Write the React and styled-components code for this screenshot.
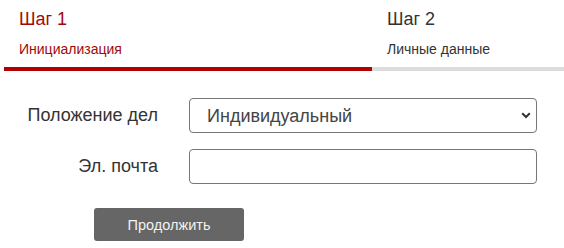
import React from 'react';
import styled, { createGlobalStyle } from 'styled-components';

const GlobalStyle = createGlobalStyle`
  html, body {
    margin: 0;
    padding: 0;
    background: #fff;
    font-family: "Liberation Sans", Arial, sans-serif;
    overflow: hidden;
  }
`;

const Page = styled.div`
  width: 564px;
  height: 248px;
  overflow: hidden;
`;

const Steps = styled.div`
  display: flex;
  width: 736px;
  margin-left: 4px;
  padding-top: 9px;
`;

const Step = styled.div`
  width: 368px;
  flex: none;
  padding: 0 0 10px 15px;
  box-sizing: border-box;
  border-bottom: 4px solid ${(p) => (p.active || p.done ? '#b30000' : '#dcdcdc')};
  color: ${(p) => (p.active ? '#a00a0a' : '#333')};
`;

const StepTitle = styled.div`
  font-size: 18px;
  line-height: 21px;
`;

const StepSub = styled.div`
  font-size: 14px;
  line-height: 16px;
  margin-top: 11px;
`;

const Form = styled.form`
  display: grid;
  grid-template-columns: 158px 348px;
  column-gap: 31px;
  row-gap: 16px;
  align-items: center;
  margin-top: 27px;
`;

const Label = styled.label`
  font-size: 18px;
  color: #333;
  text-align: right;
`;

const Field = styled.input`
  height: 35px;
  box-sizing: border-box;
  border: 1px solid #767676;
  border-radius: 4px;
  font-family: inherit;
  font-size: 18px;
  padding: 0 17px;
  outline: none;
`;

const SelectWrap = styled.div`
  position: relative;
  height: 35px;
`;

const Select = styled.select`
  appearance: none;
  width: 100%;
  height: 35px;
  box-sizing: border-box;
  border: 1px solid #767676;
  border-radius: 4px;
  background: #fff;
  font-family: inherit;
  font-size: 18px;
  color: #444;
  padding: 0 30px 0 17px;
  outline: none;
`;

const Chevron = styled.svg`
  position: absolute;
  right: 6px;
  top: 14px;
  pointer-events: none;
`;

const Actions = styled.div`
  padding: 24px 0 0 94px;
`;

const Button = styled.button`
  width: 150px;
  height: 33px;
  border: none;
  border-radius: 3px;
  background: #666;
  color: #f2f2f2;
  font-family: inherit;
  font-size: 14.5px;
  cursor: pointer;
`;

export default function App() {
  return (
    <Page>
      <GlobalStyle />
      <Steps>
        <Step active>
          <StepTitle>Шаг 1</StepTitle>
          <StepSub>Инициализация</StepSub>
        </Step>
        <Step>
          <StepTitle>Шаг 2</StepTitle>
          <StepSub>Личные данные</StepSub>
        </Step>
      </Steps>
      <Form onSubmit={(e) => e.preventDefault()}>
        <Label htmlFor="status">Положение дел</Label>
        <SelectWrap>
          <Select id="status" defaultValue="ind">
            <option value="ind">Индивидуальный</option>
            <option value="org">Организация</option>
          </Select>
          <Chevron width="10" height="7" viewBox="0 0 10 7">
            <path d="M1.2 1.2 L5 5 L8.8 1.2" fill="none" stroke="#333" strokeWidth="2" />
          </Chevron>
        </SelectWrap>
        <Label htmlFor="email">Эл. почта</Label>
        <Field id="email" type="email" />
      </Form>
      <Actions>
        <Button type="button">Продолжить</Button>
      </Actions>
    </Page>
  );
}
